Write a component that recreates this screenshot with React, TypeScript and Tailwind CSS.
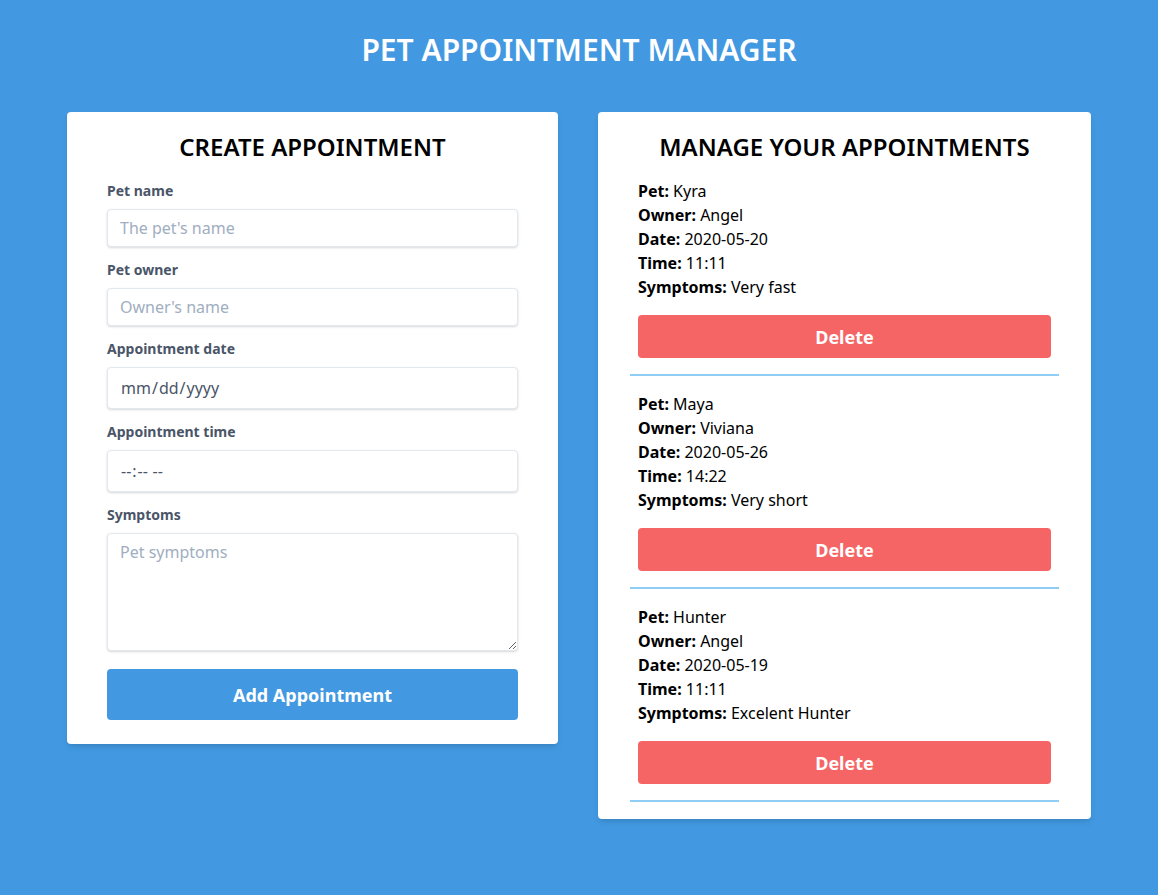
import React from 'react'

type Appointment = {
  pet: string
  owner: string
  date: string
  time: string
  symptoms: string
}

const appointments: Appointment[] = [
  { pet: 'Kyra', owner: 'Angel', date: '2020-05-20', time: '11:11', symptoms: 'Very fast' },
  { pet: 'Maya', owner: 'Viviana', date: '2020-05-26', time: '14:22', symptoms: 'Very short' },
  { pet: 'Hunter', owner: 'Angel', date: '2020-05-19', time: '11:11', symptoms: 'Excelent Hunter' },
]

const inputClass =
  'block w-full rounded border border-[#e2e8f0] bg-white px-3 text-base leading-5 text-[#4a5568] shadow-[0_1px_3px_0_rgba(0,0,0,0.1),0_1px_2px_0_rgba(0,0,0,0.06)] outline-none placeholder:text-[#a0aec0]'

const labelClass = 'mb-2 block text-sm leading-5 font-bold text-[#4a5568]'

function CreateForm(): JSX.Element {
  return (
    <div className="rounded bg-white px-10 pt-[19px] pb-6 shadow-md">
      <h2 className="mb-[18px] text-center text-2xl leading-8 font-semibold text-black">CREATE APPOINTMENT</h2>

      <label className={labelClass}>Pet name</label>
      <input className={`${inputClass} mb-[13px] h-[38px]`} type="text" placeholder="The pet's name" />

      <label className={labelClass}>Pet owner</label>
      <input className={`${inputClass} mb-[13px] h-[38px]`} type="text" placeholder="Owner's name" />

      <label className={labelClass}>Appointment date</label>
      <input
        className={`${inputClass} mb-[13px] h-[42px] [&::-webkit-calendar-picker-indicator]:hidden`}
        type="date"
      />

      <label className={labelClass}>Appointment time</label>
      <input
        className={`${inputClass} mb-[13px] h-[42px] tracking-wide [&::-webkit-calendar-picker-indicator]:hidden`}
        type="time"
      />

      <label className={labelClass}>Symptoms</label>
      <textarea className={`${inputClass} h-[118px] py-2`} placeholder="Pet symptoms" />

      <button className="mt-[18px] block h-[51px] w-full rounded bg-[#4299e1] text-lg font-bold text-white">
        Add Appointment
      </button>
    </div>
  )
}

function AppointmentItem({ item, first }: { item: Appointment; first: boolean }): JSX.Element {
  return (
    <div className={`border-b-2 border-[#90cdf4] px-2 pb-4 ${first ? 'pt-0' : 'pt-4'}`}>
      <p className="leading-6"><span className="font-bold">Pet:</span> {item.pet}</p>
      <p className="leading-6"><span className="font-bold">Owner:</span> {item.owner}</p>
      <p className="leading-6"><span className="font-bold">Date:</span> {item.date}</p>
      <p className="leading-6"><span className="font-bold">Time:</span> {item.time}</p>
      <p className="leading-6"><span className="font-bold">Symptoms:</span> {item.symptoms}</p>
      <button className="mt-4 block h-[43px] w-full rounded bg-[#f56565] text-lg font-bold text-white">Delete</button>
    </div>
  )
}

export default function App(): JSX.Element {
  return (
    <div className="min-h-screen bg-[#4299e1] pt-8 font-['Noto_Sans',sans-serif] text-black">
      {/* Title */}
      <h1 className="mb-11 text-center text-3xl leading-9 font-semibold text-white">PET APPOINTMENT MANAGER</h1>

      {/* Columns */}
      <div className="mx-auto grid w-[1024px] grid-cols-[491px_493px] items-start gap-10">
        <CreateForm />

        <div className="rounded bg-white px-8 pt-[19px] pb-[17px] shadow-md">
          <h2 className="mb-4 text-center text-2xl leading-8 font-semibold">MANAGE YOUR APPOINTMENTS</h2>
          {appointments.map((a, i) => (
            <AppointmentItem key={a.pet} item={a} first={i === 0} />
          ))}
        </div>
      </div>
    </div>
  )
}
